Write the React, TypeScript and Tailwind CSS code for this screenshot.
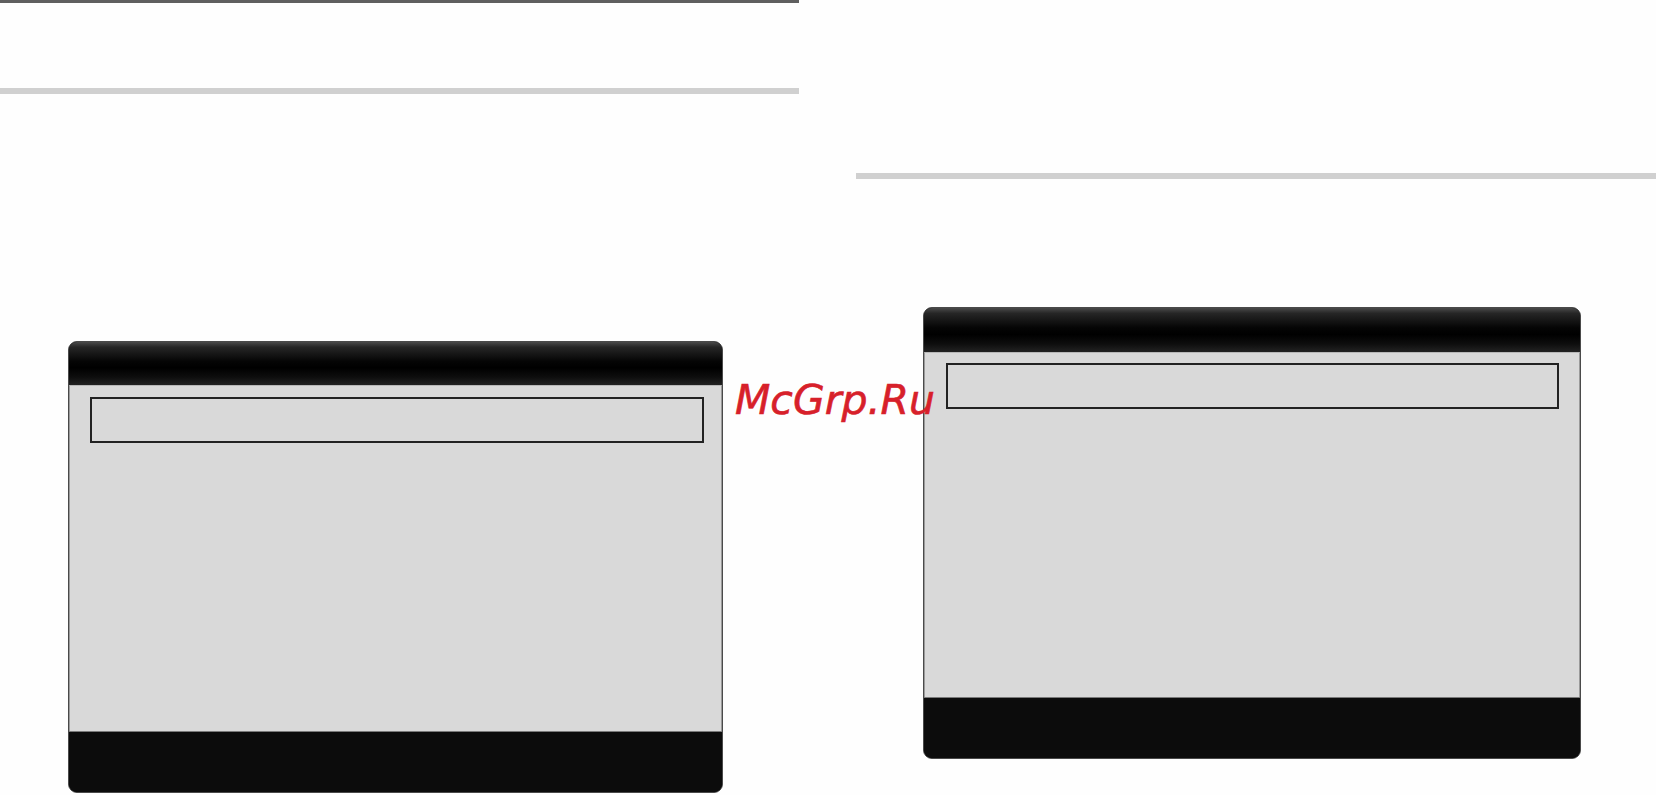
import React from "react";

type PanelProps = {
  headerH: number;
  bodyH: number;
  boxInset: string;
};

// Dark-framed screen mockup: glossy header, light body holding an outlined field, dark footer.
function ScreenPanel({ headerH, bodyH, boxInset }: PanelProps) {
  return (
    <div className="flex h-full w-full flex-col overflow-hidden rounded-[9px] border border-[#4a4a4a] bg-[#0b0b0b]">
      <div
        className="w-full shrink-0 bg-[linear-gradient(to_bottom,#4a4a4a_0%,#262626_12%,#050505_45%,#000000_60%,#0e0e0e_82%,#222222_100%)]"
        style={{ height: headerH }}
      />
      <div
        className="w-full shrink-0 border-x border-t border-x-[#9a9a9a] border-t-[#b8b8b8] bg-[#d9d9d9]"
        style={{ height: bodyH }}
      >
        <div className={boxInset}>
          <div className="h-[46px] w-full border-2 border-[#222222]" />
        </div>
      </div>
      <div className="w-full flex-1 border-t border-[#7a7a7a] bg-[#0c0c0c]" />
    </div>
  );
}

export default function App() {
  return (
    <div className="relative h-[795px] w-[1656px] overflow-hidden bg-[#fefefe] font-['DejaVu_Sans',sans-serif]">
      <div className="flex h-full w-full flex-row">
        {/* left column */}
        <div className="flex w-[799px] shrink-0 flex-col">
          <div className="h-[3px] w-full bg-[#5f5f5f]" />
          <div className="mt-[85px] h-[6px] w-full bg-[#d0d0d0]" />
          <div className="ml-[68px] mt-[247px] h-[452px] w-[655px]">
            <ScreenPanel headerH={43} bodyH={346} boxInset="pl-[20px] pr-[17px] pt-[11px]" />
          </div>
        </div>

        {/* right column */}
        <div className="ml-[57px] flex flex-1 flex-col pt-[173px]">
          <div className="h-[6px] w-full bg-[#d0d0d0]" />
          <div className="ml-[67px] mt-[128px] h-[452px] w-[658px]">
            <ScreenPanel headerH={44} bodyH={345} boxInset="pl-[21px] pr-[20px] pt-[10px]" />
          </div>
        </div>
      </div>

      {/* site watermark */}
      <div className="absolute left-[735px] top-[380px] text-[41px] italic leading-none text-[#d7202a] [-webkit-text-stroke:0.6px_#d7202a] font-['DejaVu_Sans',sans-serif]">
        McGrp.Ru
      </div>
    </div>
  );
}
